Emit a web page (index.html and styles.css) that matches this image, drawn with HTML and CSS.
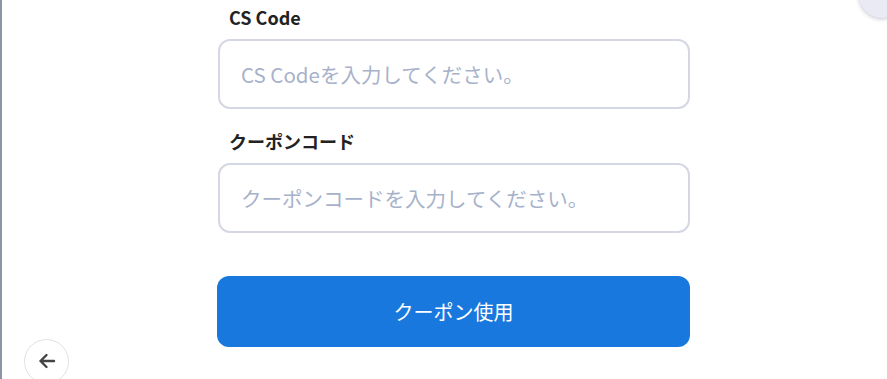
FILE: index.html
```html
<!DOCTYPE html>
<html lang="ja">
<head>
    <meta charset="UTF-8">
    <meta name="viewport" content="width=device-width, initial-scale=1.0">
    <title>クーポン</title>
    <link rel="stylesheet" href="styles.css">
</head>
<body>
    <div class="modal">
        <button class="close-button" aria-label="閉じる">
            <svg width="14" height="14" viewBox="0 0 14 14"><path d="M2 2 L12 12 M12 2 L2 12" stroke="#6b6f80" stroke-width="2" stroke-linecap="round"/></svg>
        </button>

        <form class="coupon-form">
            <div class="field">
                <label class="field-label" for="csCode">CS Code</label>
                <input type="text" class="field-input" id="csCode" placeholder="CS Codeを入力してください。">
            </div>

            <div class="field">
                <label class="field-label" for="coupon">クーポンコード</label>
                <input type="text" class="field-input" id="coupon" placeholder="クーポンコードを入力してください。">
            </div>

            <button type="button" class="submit-button">クーポン使用</button>
        </form>

        <button class="back-button" aria-label="戻る">
            <svg width="22" height="22" viewBox="0 0 22 22"><path d="M18 11 H4.5 M10.5 5 L4.5 11 L10.5 17" fill="none" stroke="#444" stroke-width="2.4" stroke-linecap="round" stroke-linejoin="round"/></svg>
        </button>
    </div>
</body>
</html>
```

FILE: styles.css
```css
* {
    margin: 0;
    padding: 0;
    box-sizing: border-box;
    font-family: "Noto Sans CJK JP", "Noto Sans", sans-serif;
}
body {
    background-color: #ffffff;
    overflow: hidden;
}
.modal {
    position: relative;
    height: 379px;
    border-left: 2px solid #8e93a6;
    display: flex;
    justify-content: flex-start;
    padding: 5px 0 0 216px;
}
.coupon-form {
    width: 472px;
    display: flex;
    flex-direction: column;
}
.field {
    display: flex;
    flex-direction: column;
    margin-bottom: 20px;
}
.field-label {
    font-size: 18px;
    font-weight: 700;
    line-height: 24px;
    color: #222222;
    padding-left: 11px;
    margin-bottom: 10px;
}
.field-input {
    height: 70px;
    padding: 0 21px;
    font-size: 20.5px;
    color: #222222;
    border: 2px solid #d5d8e4;
    border-radius: 12px;
    outline: none;
}
.field-input::placeholder {
    color: #a7b2ca;
}
.submit-button {
    margin-top: 23px;
    height: 71px;
    width: 473px;
    margin-left: -1px;
    border: none;
    border-radius: 12px;
    background-color: #1878dd;
    color: #ffffff;
    font-size: 20px;
    cursor: pointer;
}
.close-button {
    position: absolute;
    top: -28px;
    right: -18px;
    width: 46px;
    height: 46px;
    border-radius: 50%;
    border: none;
    background-color: #e9eaf4;
    box-shadow: 0 1px 4px rgba(80, 84, 120, 0.35);
    display: flex;
    align-items: flex-end;
    justify-content: flex-start;
    padding: 0 0 17px 12px;
}
.back-button {
    position: absolute;
    left: 22px;
    top: 339px;
    width: 45px;
    height: 45px;
    border-radius: 50%;
    border: 1.5px solid #e2e2e2;
    background-color: #ffffff;
    display: flex;
    align-items: center;
    justify-content: center;
    padding-bottom: 1px;
}
```
